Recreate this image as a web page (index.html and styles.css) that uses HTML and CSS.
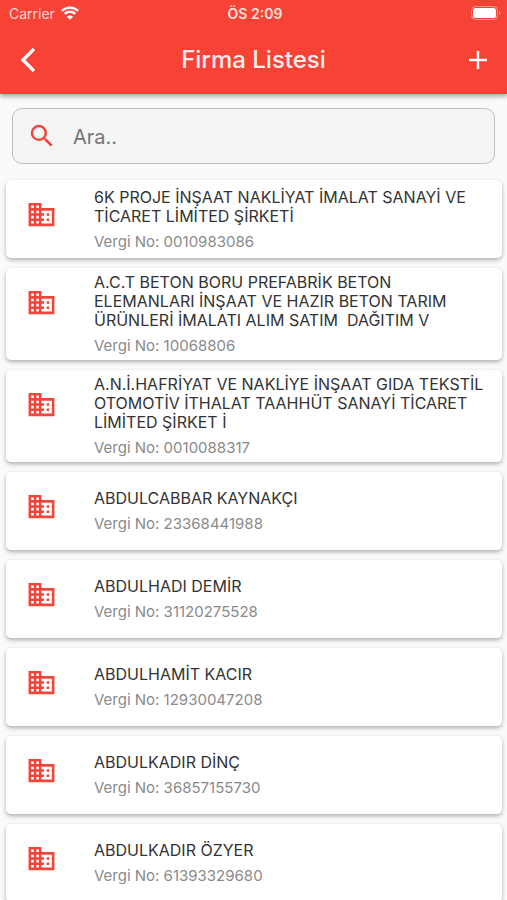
FILE: index.html
```html
<!DOCTYPE html>
<html lang="tr">
  <head>
    <meta charset="UTF-8" />
    <meta name="viewport" content="width=device-width, initial-scale=1.0" />
    <title>Firma Listesi</title>
    <link rel="stylesheet" href="styles.css" />
  </head>
  <body>
    <!-- Icons -->
    <svg class="sprite" aria-hidden="true">
      <symbol id="icon-company" viewBox="0 0 24 24">
        <path d="M12 7V3H2v18h20V7H12zM6 19H4v-2h2v2zm0-4H4v-2h2v2zm0-4H4V9h2v2zm0-4H4V5h2v2zm4 12H8v-2h2v2zm0-4H8v-2h2v2zm0-4H8V9h2v2zm0-4H8V5h2v2zm10 12h-8v-2h2v-2h-2v-2h2v-2h-2V9h8v10zm-2-8h-2v2h2v-2zm0 4h-2v2h2v-2z" />
      </symbol>
    </svg>

    <header class="header">
      <div class="status-bar">
        <div class="carrier">
          <span>Carrier</span>
          <svg class="wifi" viewBox="0 0 18 14" aria-hidden="true">
            <path d="M1 4.9a11.4 11.4 0 0 1 16 0M3.8 7.9a7.4 7.4 0 0 1 10.4 0" />
            <path class="wifi-dot" d="M9 13.8 5.9 10.7a4.4 4.4 0 0 1 6.2 0z" />
          </svg>
        </div>
        <span class="clock">ÖS 2:09</span>
        <svg class="battery" viewBox="0 0 30 14" aria-hidden="true">
          <rect class="battery-case" x="0.5" y="0.5" width="26" height="13" rx="4" />
          <rect x="2" y="2" width="23" height="10" rx="2.5" />
          <path class="battery-cap" d="M28 5v4c2-.8 2-3.200 0-4z" />
        </svg>
      </div>
      <div class="toolbar">
        <button class="icon-button" type="button" aria-label="Geri">
          <svg viewBox="0 0 30 30" aria-hidden="true"><path class="back" d="M20 4 9 15l11 11" /></svg>
        </button>
        <h1>Firma Listesi</h1>
        <button class="icon-button" type="button" aria-label="Ekle">
          <svg viewBox="0 0 30 30" aria-hidden="true"><path class="plus" d="M15 6v18M6 15h18" /></svg>
        </button>
      </div>
    </header>

    <main class="content">
      <form class="search">
        <label for="search-input" aria-label="Ara">
          <svg viewBox="0 0 24 24" aria-hidden="true">
            <path d="M15.500 14h-.79l-.28-.27A6.471 6.471 0 0 0 16 9.500 6.500 6.500 0 1 0 9.500 16c1.610 0 3.090-.59 4.230-1.570l.27.28v.79l5 4.990L20.490 19l-4.990-5zm-6 0C7.010 14 5 11.990 5 9.500S7.010 5 9.500 5 14 7.010 14 9.500 11.990 14 9.500 14z" />
          </svg>
        </label>
        <input type="text" id="search-input" name="search" placeholder="Ara.." />
      </form>

      <ul class="company-list">
        <li>
          <a class="company" href="#">
            <svg><use href="#icon-company" /></svg>
            <div class="company-info">
              <h2>6K PROJE İNŞAAT NAKLİYAT İMALAT SANAYİ VE TİCARET LİMİTED ŞİRKETİ</h2>
              <p>Vergi No: 0010983086</p>
            </div>
          </a>
        </li>
        <li>
          <a class="company" href="#">
            <svg><use href="#icon-company" /></svg>
            <div class="company-info">
              <h2>A.C.T BETON BORU PREFABRİK BETON ELEMANLARI İNŞAAT VE HAZIR BETON TARIM ÜRÜNLERİ İMALATI ALIM SATIM  DAĞITIM V</h2>
              <p>Vergi No: 10068806</p>
            </div>
          </a>
        </li>
        <li>
          <a class="company" href="#">
            <svg><use href="#icon-company" /></svg>
            <div class="company-info">
              <h2>A.N.İ.HAFRİYAT VE NAKLİYE İNŞAAT GIDA TEKSTİL OTOMOTİV İTHALAT TAAHHÜT SANAYİ TİCARET LİMİTED ŞİRKET İ</h2>
              <p>Vergi No: 0010088317</p>
            </div>
          </a>
        </li>
        <li>
          <a class="company" href="#">
            <svg><use href="#icon-company" /></svg>
            <div class="company-info">
              <h2>ABDULCABBAR KAYNAKÇI</h2>
              <p>Vergi No: 23368441988</p>
            </div>
          </a>
        </li>
        <li>
          <a class="company" href="#">
            <svg><use href="#icon-company" /></svg>
            <div class="company-info">
              <h2>ABDULHADI DEMİR</h2>
              <p>Vergi No: 31120275528</p>
            </div>
          </a>
        </li>
        <li>
          <a class="company" href="#">
            <svg><use href="#icon-company" /></svg>
            <div class="company-info">
              <h2>ABDULHAMİT KACIR</h2>
              <p>Vergi No: 12930047208</p>
            </div>
          </a>
        </li>
        <li>
          <a class="company" href="#">
            <svg><use href="#icon-company" /></svg>
            <div class="company-info">
              <h2>ABDULKADIR DİNÇ</h2>
              <p>Vergi No: 36857155730</p>
            </div>
          </a>
        </li>
        <li>
          <a class="company" href="#">
            <svg><use href="#icon-company" /></svg>
            <div class="company-info">
              <h2>ABDULKADIR ÖZYER</h2>
              <p>Vergi No: 61393329680</p>
            </div>
          </a>
        </li>
      </ul>
    </main>
  </body>
</html>
```
FILE: styles.css
```css
* {
  box-sizing: border-box;
}

body {
  display: flex;
  flex-direction: column;
  height: 100vh;
  margin: 0;
  font-family: Inter, "Liberation Sans", sans-serif;
  background-color: #fafafa;
}

h1,
h2,
p,
ul {
  margin: 0;
  padding: 0;
}

.sprite {
  display: none;
}

/* Header */
.header {
  flex: none;
  z-index: 1;
  padding-bottom: 8px;
  background-color: #f64336;
  color: #fff;
  box-shadow: 0 2px 5px rgba(0, 0, 0, 0.4);
}

.status-bar {
  display: grid;
  grid-template-columns: 1fr auto 1fr;
  align-items: center;
  height: 26px;
  padding: 0 6px 0 9px;
  font-size: 14px;
}

.carrier {
  display: flex;
  align-items: center;
  gap: 6px;
  color: #ffd5d1;
}

.wifi {
  width: 18px;
  height: 14px;
  fill: none;
  stroke: #fff;
  stroke-width: 2.4;
}

.wifi-dot {
  fill: #fff;
  stroke: none;
}

.clock {
  font-weight: 600;
  color: #ffe0dc;
}

.battery {
  justify-self: end;
  width: 30px;
  height: 14px;
  fill: #fff;
}

.battery-case {
  fill: none;
  stroke: #fff;
  stroke-opacity: 0.45;
}

.battery-cap {
  fill-opacity: 0.5;
}

.toolbar {
  display: flex;
  align-items: center;
  justify-content: space-between;
  height: 60px;
  padding: 8px 14px 0;
}

.toolbar h1 {
  font-size: 24px;
  font-weight: 500;
  line-height: 30px;
  color: #ffeeec;
}

.icon-button {
  width: 30px;
  height: 30px;
  padding: 0;
  border: none;
  background: none;
  cursor: pointer;
}

.icon-button svg {
  display: block;
  fill: none;
  stroke: #fff;
}

.back {
  stroke-width: 3.4;
}

.plus {
  stroke-width: 2.4;
}

/* Search */
.content {
  flex: 1;
  min-height: 0;
  overflow-y: auto;
  scrollbar-width: none;
}

.search {
  display: flex;
  align-items: center;
  height: 56px;
  margin: 14px 12px 16px;
  padding-left: 14px;
  border: 1px solid #c0c0c0;
  border-radius: 10px;
  background-color: #f5f5f5;
}

.search label {
  height: 30px;
}

.search svg {
  width: 30px;
  height: 30px;
  fill: #f0453a;
}

.search input {
  flex: 1;
  min-width: 0;
  padding: 2px 16px 0;
  border: none;
  outline: none;
  background: none;
  font-family: inherit;
  font-size: 20px;
  color: #333;
}

.search input::placeholder {
  color: #757575;
}

/* Company cards */
.company-list {
  display: flex;
  flex-direction: column;
  gap: 10px;
  padding: 0 5px 10px 6px;
  list-style: none;
}

.company {
  display: flex;
  align-items: center;
  gap: 37px;
  min-height: 78px;
  padding: 5px 12px 5px 20px;
  border-radius: 5px;
  background-color: #fff;
  color: #333;
  text-decoration: none;
  box-shadow: 0 2px 4px rgba(0, 0, 0, 0.3);
}

.company svg {
  flex: none;
  align-self: flex-start;
  width: 31px;
  height: 31px;
  margin-top: 14px;
  fill: #f0453a;
}

.company h2 {
  font-size: 16px;
  font-weight: 400;
  line-height: 19px;
  white-space: pre-wrap;
}

.company p {
  margin-top: 7px;
  font-size: 15px;
  line-height: 18px;
  color: #8a8a8a;
}
```
